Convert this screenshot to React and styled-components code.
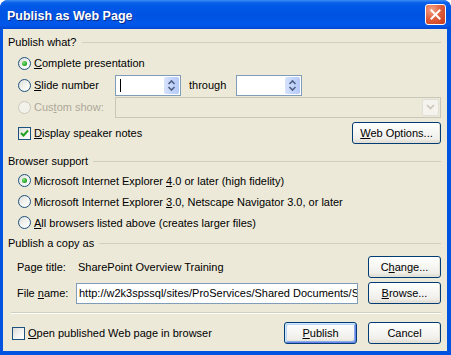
import React from 'react';
import styled, { createGlobalStyle } from 'styled-components';

const GlobalStyle = createGlobalStyle`
  html, body { margin: 0; padding: 0; background: #ffffff; }
  body {
    font-family: "Liberation Sans", Arial, sans-serif;
    font-size: 11px;
    color: #000;
  }
`;

const Window = styled.div`
  width: 451px;
  height: 355px;
  display: flex;
  flex-direction: column;
  background: #0053e1;
  border-radius: 8px 8px 0 0;
  overflow: hidden;
`;

const TitleBar = styled.div`
  height: 29px;
  flex: none;
  display: flex;
  align-items: center;
  justify-content: space-between;
  padding: 0 5px 0 7px;
  background: linear-gradient(to bottom, #3e8ef7 0%, #0c62e9 9%, #0058e6 22%, #0053e2 55%, #0058ea 85%, #0048d4 100%);
`;

const Title = styled.div`
  font-family: "Liberation Sans", Arial, sans-serif;
  font-weight: bold;
  font-size: 12.5px;
  color: #fff;
  text-shadow: 1px 1px 0 #0a2a8a;
  padding-top: 3px;
`;

const CloseButton = styled.div`
  width: 21px;
  height: 21px;
  box-sizing: border-box;
  border: 1px solid #fff;
  border-radius: 3px;
  background: radial-gradient(circle at 30% 25%, #f4a58b 0%, #e2613f 45%, #c6391b 100%);
  display: flex;
  align-items: center;
  justify-content: center;
`;

const Content = styled.div`
  flex: 1;
  margin: 0 4px 4px 3px;
  background: #ece9d8;
  padding: 6px 6px 0 5px;
  display: flex;
  flex-direction: column;
`;

const GroupHeader = styled.div`
  height: 14px;
  display: flex;
  align-items: center;
  gap: 5px;
  margin-top: ${p => p.$mt || 0}px;
  &::after {
    content: "";
    flex: 1;
    height: 1px;
    background: #d0d0bf;
  }
`;

const Row = styled.div`
  height: ${p => p.$h || 22}px;
  display: flex;
  align-items: center;
  padding-left: ${p => p.$indent || 0}px;
  margin-top: ${p => p.$mt || 0}px;
`;

const Choice = styled.label`
  display: flex;
  align-items: center;
  gap: 3px;
  width: ${p => (p.$w ? `${p.$w}px` : 'auto')};
  color: ${p => (p.$disabled ? '#aca899' : '#000')};
  flex: none;
`;

const RadioMark = styled.span`
  width: 13px;
  height: 13px;
  box-sizing: border-box;
  border-radius: 50%;
  border: 1px solid ${p => (p.$disabled ? '#cac8bb' : '#1c5180')};
  background: ${p => (p.$disabled
    ? '#f3f2ea'
    : 'linear-gradient(135deg, #dcdcd7 0%, #f4f4f1 55%, #ffffff 100%)')};
  display: flex;
  align-items: center;
  justify-content: center;
  &::after {
    content: "";
    display: ${p => (p.$checked ? 'block' : 'none')};
    width: 5px;
    height: 5px;
    border-radius: 50%;
    background: radial-gradient(circle at 35% 35%, #7ee07a 0%, #2aa826 60%, #1a8a17 100%);
  }
`;

const CheckMark = styled.span`
  width: 13px;
  height: 13px;
  box-sizing: border-box;
  border: 1px solid #1c5180;
  background: linear-gradient(135deg, #dcdcd7 0%, #f4f4f1 55%, #ffffff 100%);
  display: flex;
  align-items: center;
  justify-content: center;
`;

const Key = styled.span`
  text-decoration: underline;
`;

const SpinBox = styled.div`
  width: 66px;
  height: 21px;
  box-sizing: border-box;
  border: 1px solid #7f9db9;
  background: #fff;
  display: flex;
  align-items: center;
  padding: 1px;
`;

const Caret = styled.span`
  width: 1px;
  height: 13px;
  margin-left: 3px;
  background: ${p => (p.$on ? '#000' : 'transparent')};
`;

const SpinButton = styled.div`
  margin-left: auto;
  width: 15px;
  height: 17px;
  border-radius: 2px;
  background: linear-gradient(to right, #d7e2fc 0%, #c1d3fb 60%, #b4c8f6 100%);
  display: flex;
  align-items: center;
  justify-content: center;
`;

const Through = styled.span`
  width: 55px;
  padding-left: 8px;
  box-sizing: border-box;
  flex: none;
`;

const Combo = styled.div`
  flex: 1;
  height: 21px;
  box-sizing: border-box;
  border: 1px solid #c9c7ba;
  background: #ece9d8;
  display: flex;
  justify-content: flex-end;
  padding: 1px;
`;

const ComboArrow = styled.div`
  width: 17px;
  border-radius: 2px;
  background: #f4f3ee;
  border: 1px solid #e1e0d6;
  box-sizing: border-box;
  display: flex;
  align-items: center;
  justify-content: center;
`;

const Button = styled.button`
  width: ${p => p.$w || 73}px;
  height: 22px;
  margin-left: ${p => (p.$push ? 'auto' : `${p.$ml || 0}px`)};
  padding: 0;
  flex: none;
  box-sizing: border-box;
  border: 1px solid #003c74;
  border-radius: 3px;
  font-family: "Liberation Sans", Arial, sans-serif;
  font-size: 11px;
  color: #000;
  background: linear-gradient(to bottom, #ffffff 0%, #f7f7f4 40%, #efeee9 80%, #dcd8cd 100%);
  box-shadow: ${p => (p.$default
    ? 'inset 1px 1px 0 #cee7ff, inset -1px -1px 0 #6982ee, inset 2px 2px 0 #bcd4f6, inset -2px -2px 0 #89ade4'
    : 'inset -1px -1px 0 #e3e1d6')};
`;

const FieldLabel = styled.span`
  width: ${p => p.$w}px;
  flex: none;
`;

const TextBox = styled.div`
  width: 282px;
  height: 21px;
  box-sizing: border-box;
  border: 1px solid #7f9db9;
  background: #fff;
  padding: 0 2px;
  display: flex;
  align-items: center;
  white-space: nowrap;
  overflow: hidden;
  flex: none;
`;

const Separator = styled.div`
  margin-top: 8px;
  height: 1px;
  background: #d0d0bf;
  border-bottom: 1px solid #ffffff;
  margin-left: 3px;
`;

const Radio = ({ checked, disabled, w, children }) => (
  <Choice $w={w} $disabled={disabled}>
    <RadioMark $checked={checked} $disabled={disabled} />
    <span>{children}</span>
  </Choice>
);

const Check = ({ checked, children }) => (
  <Choice>
    <CheckMark>
      {checked && (
        <svg width="9" height="9" viewBox="0 0 9 9">
          <path d="M1 4 L3.5 6.5 L8 1.5" fill="none" stroke="#21a121" strokeWidth="2" />
        </svg>
      )}
    </CheckMark>
    <span>{children}</span>
  </Choice>
);

const Spinner = ({ caret }) => (
  <SpinBox>
    <Caret $on={caret} />
    <SpinButton>
      <svg width="9" height="13" viewBox="0 0 9 13">
        <path d="M1.5 5 L4.5 2 L7.5 5" fill="none" stroke="#4d6185" strokeWidth="1.6" />
        <path d="M1.5 8 L4.5 11 L7.5 8" fill="none" stroke="#4d6185" strokeWidth="1.6" />
      </svg>
    </SpinButton>
  </SpinBox>
);

export default function App() {
  return (
    <>
      <GlobalStyle />
      <Window>
        <TitleBar>
          <Title>Publish as Web Page</Title>
          <CloseButton>
            <svg width="11" height="11" viewBox="0 0 11 11">
              <path d="M1.5 1.5 L9.5 9.5 M9.5 1.5 L1.5 9.5" stroke="#fff" strokeWidth="2" strokeLinecap="square" />
            </svg>
          </CloseButton>
        </TitleBar>
        <Content>
          <GroupHeader>Publish what?</GroupHeader>
          <Row $indent={10} $mt={3}>
            <Radio checked><Key>C</Key>omplete presentation</Radio>
          </Row>
          <Row $indent={10}>
            <Radio w={97}><Key>S</Key>lide number</Radio>
            <Spinner caret />
            <Through>through</Through>
            <Spinner />
          </Row>
          <Row $indent={10}>
            <Radio w={97} disabled>Cus<Key>t</Key>om show:</Radio>
            <Combo>
              <ComboArrow>
                <svg width="9" height="6" viewBox="0 0 9 6">
                  <path d="M1 1 L4.5 4.5 L8 1" fill="none" stroke="#c9c7ba" strokeWidth="1.6" />
                </svg>
              </ComboArrow>
            </Combo>
          </Row>
          <Row $indent={10} $mt={4}>
            <Check checked><Key>D</Key>isplay speaker notes</Check>
            <Button $push $w={89}><Key>W</Key>eb Options...</Button>
          </Row>

          <GroupHeader $mt={10}>Browser support</GroupHeader>
          <Row $indent={10} $h={21} $mt={2}>
            <Radio checked>Microsoft Internet Explorer <Key>4</Key>.0 or later (high fidelity)</Radio>
          </Row>
          <Row $indent={10} $h={21}>
            <Radio>Microsoft Internet Explorer <Key>3</Key>.0, Netscape Navigator 3.0, or later</Radio>
          </Row>
          <Row $indent={10} $h={21}>
            <Radio><Key>A</Key>ll browsers listed above (creates larger files)</Radio>
          </Row>

          <GroupHeader $mt={3}>Publish a copy as</GroupHeader>
          <Row $indent={9} $mt={6}>
            <FieldLabel $w={61}>Page title:</FieldLabel>
            <span>SharePoint Overview Training</span>
            <Button $push>C<Key>h</Key>ange...</Button>
          </Row>
          <Row $indent={9} $mt={4}>
            <FieldLabel $w={59}>File <Key>n</Key>ame:</FieldLabel>
            <TextBox>http://w2k3spssql/sites/ProServices/Shared Documents/S</TextBox>
            <Button $push><Key>B</Key>rowse...</Button>
          </Row>

          <Separator />
          <Row $indent={4} $mt={8}>
            <Check><Key>O</Key>pen published Web page in browser</Check>
            <Button $push $default><Key>P</Key>ublish</Button>
            <Button $ml={11}>Cancel</Button>
          </Row>
        </Content>
      </Window>
    </>
  );
}
